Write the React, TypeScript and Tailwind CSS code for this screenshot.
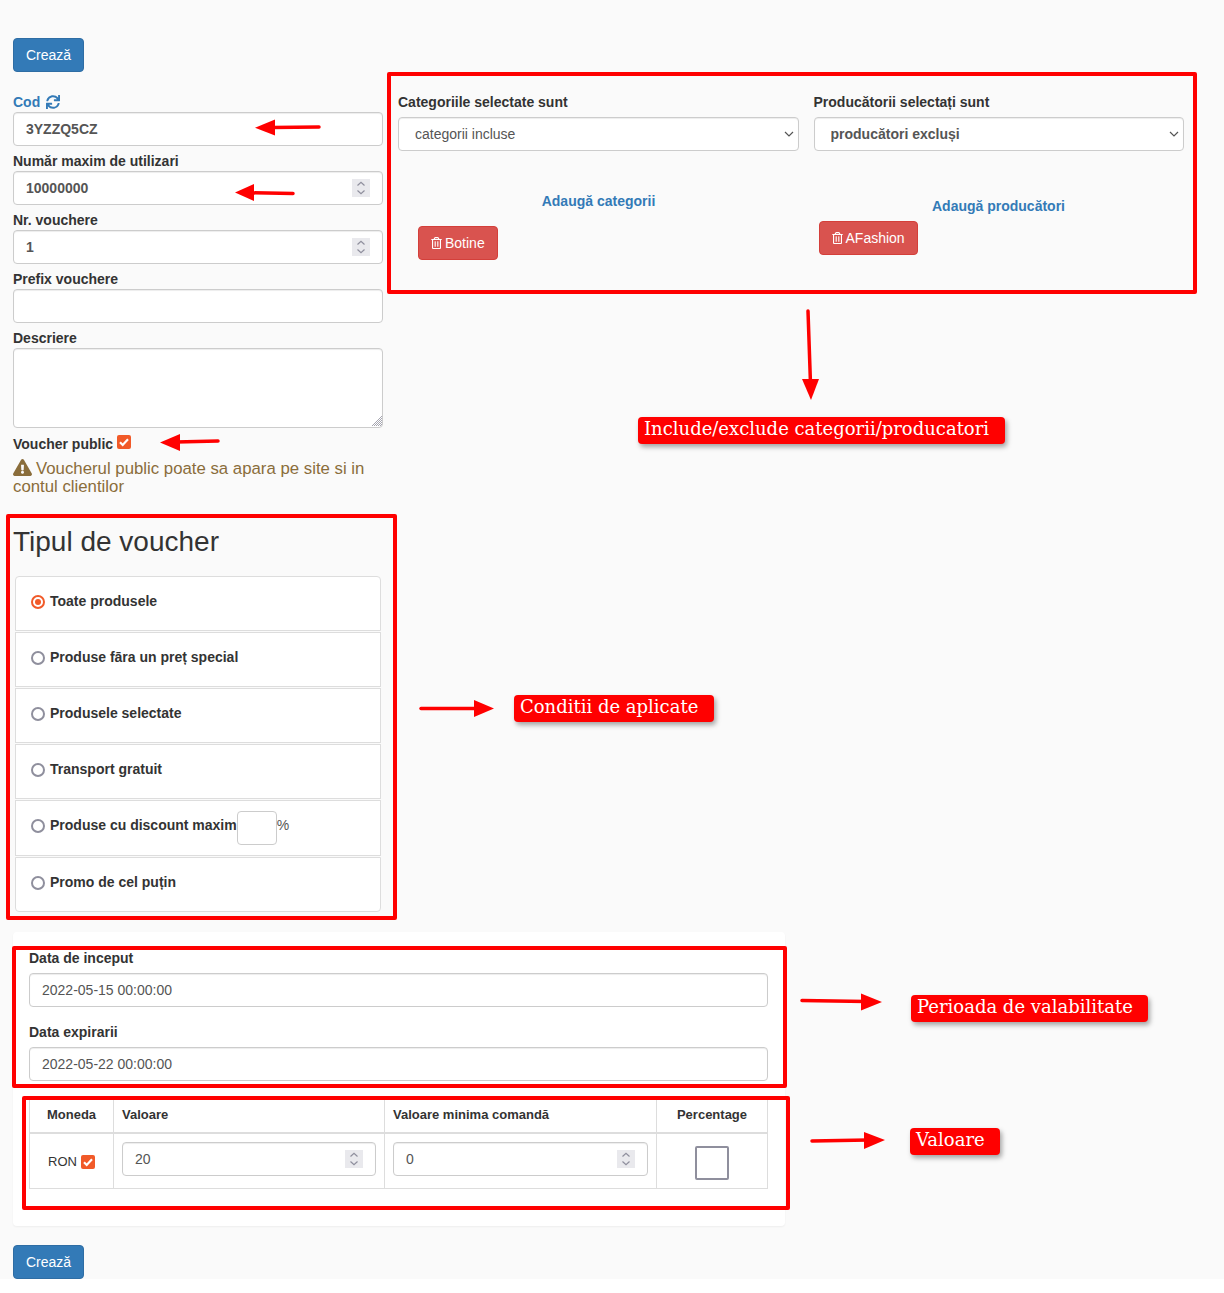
import React from 'react';
import { FaExclamationTriangle, FaRegTrashAlt, FaSync } from 'react-icons/fa';

const inputClass =
  'block w-full h-[34px] px-3 bg-white border border-[#ccc] rounded-[4px] text-sm text-[#555] shadow-[inset_0_1px_1px_rgba(0,0,0,0.075)] outline-none';
const labelClass = 'block text-sm leading-5 font-bold text-[#333]';
const numberClass = `${inputClass} [appearance:textfield] [&::-webkit-inner-spin-button]:appearance-none`;

const CreateButton = () => (
  <button
    type="button"
    className="block w-[71px] h-[34px] bg-[#337ab7] border border-[#2e6da4] rounded-[4px] text-sm text-white"
  >
    Crează
  </button>
);

const NumberField = ({ value, bold }: { value?: string; bold?: boolean }) => (
  <div className="relative">
    <input type="number" defaultValue={value} className={`${numberClass} ${bold ? 'font-bold' : ''}`} />
    <span className="absolute right-[13px] top-[8px] w-[18px] h-[18px] bg-[#e9e9ed]">
      <svg viewBox="0 0 18 18" className="w-[18px] h-[18px]" fill="none" stroke="#8f8f9d" strokeWidth="1.2">
        <path d="M5.5 6.5L9 3.2l3.5 3.3" />
        <path d="M5.5 11.5L9 14.8l3.5-3.3" />
      </svg>
    </span>
  </div>
);

const Check = () => (
  <span className="inline-flex shrink-0 items-center justify-center w-[14px] h-[14px] bg-[#f15a29] rounded-[2px]">
    <svg viewBox="0 0 14 14" className="w-[14px] h-[14px]" fill="none" stroke="#fff" strokeWidth="2.2">
      <path d="M3 7.3l2.7 2.7L11 4.3" />
    </svg>
  </span>
);

const Select = ({ value, bold }: { value: string; bold?: boolean }) => (
  <div className="relative">
    <select
      defaultValue={value}
      className={`${inputClass} appearance-none pl-4 ${bold ? 'font-bold' : ''}`}
    >
      <option>{value}</option>
    </select>
    <svg
      viewBox="0 0 10 6"
      className="absolute right-[5px] top-[14px] w-[10px] h-[6px]"
      fill="none"
      stroke="#555"
      strokeWidth="1.2"
    >
      <path d="M1 1l4 4 4-4" />
    </svg>
  </div>
);

const DeleteButton = ({ label }: { label: string }) => (
  <button
    type="button"
    className="inline-flex items-center h-[34px] px-3 bg-[#d9534f] border border-[#d43f3a] rounded-[4px] text-sm text-white"
  >
    <FaRegTrashAlt className="w-[11px] h-[12px] mr-[3px]" />
    {label}
  </button>
);

const options = [
  { label: 'Toate produsele', checked: true, tall: false },
  { label: 'Produse fāra un preț special', tall: false },
  { label: 'Produsele selectate', tall: false },
  { label: 'Transport gratuit', tall: false },
  { label: 'Produse cu discount maxim', tall: true },
  { label: 'Promo de cel puțin', tall: false },
];

const Callout = ({ className, children }: { className: string; children: React.ReactNode }) => (
  <div
    className={`absolute h-[27px] pl-[6px] bg-[#ff0000] rounded-[4px] text-white text-[18px] leading-[23px] whitespace-nowrap shadow-[2px_3px_5px_rgba(0,0,0,0.35)] font-['DejaVu_Serif',serif] ${className}`}
  >
    {children}
  </div>
);

const RedBox = ({ className }: { className: string }) => (
  <div className={`absolute border-4 border-[#ff0000] rounded-[2px] pointer-events-none ${className}`} />
);

const arrows = [
  { line: 'M319 127 L272 127.5', head: '255,127.7 275,119.5 275,135.5' },
  { line: 'M293 193.5 L250 192.8', head: '235,192.5 254,184 254,201' },
  { line: 'M218 441 L176 442', head: '160,442.5 180,434 180,451' },
  { line: 'M808 311 L810.5 384', head: '811,400 802,379 819,379' },
  { line: 'M421 708.5 L478 708.5', head: '494,708.5 474,700 474,717' },
  { line: 'M802 1000.5 L866 1001.5', head: '882,1002 861,993.5 861,1010.5' },
  { line: 'M812 1141 L868 1140', head: '885,1140 864,1132 864,1149' },
];

export default function App() {
  return (
    <div className="relative w-[1224px] h-[1293px] bg-white font-['Liberation_Sans',sans-serif] text-sm text-[#333] overflow-hidden">
      <div className="h-[1279px] bg-[#fafafa] pl-[13px] pt-[38px]">
        <CreateButton />

        <div className="flex mt-[20px]">
          <div className="w-[370px]">
            <label className="flex items-center text-sm leading-5 font-bold text-[#337ab7]">
              Cod
              <FaSync className="w-[14px] h-[14px] ml-[6px]" />
            </label>
            <input type="text" defaultValue="3YZZQ5CZ" className={`${inputClass} font-bold`} />

            <label className={`${labelClass} mt-[5px]`}>Număr maxim de utilizari</label>
            <NumberField value="10000000" bold />

            <label className={`${labelClass} mt-[5px]`}>Nr. vouchere</label>
            <NumberField value="1" bold />

            <label className={`${labelClass} mt-[5px]`}>Prefix vouchere</label>
            <input type="text" className={inputClass} />

            <label className={`${labelClass} mt-[5px]`}>Descriere</label>
            <div className="relative">
              <textarea className={`${inputClass} h-[80px] py-[6px] resize-none`} />
              <svg viewBox="0 0 11 10" className="absolute right-[1px] bottom-[2px] w-[11px] h-[10px]" stroke="#8f8f9d" strokeWidth="0.8">
                <path d="M1 10L11 0M3 10L11 2M5 10L11 4M7 10L11 6M9 10L11 8" />
              </svg>
            </div>

            <label className={`${labelClass} flex items-center mt-[6px]`}>
              Voucher public
              <span className="ml-[4px]">
                <Check />
              </span>
            </label>

            <p className="mt-[5px] text-[16.8px] leading-[18px] text-[#8a6d3b]">
              <FaExclamationTriangle className="inline-block w-[19px] h-[17px] mr-[4px] align-[-2px]" />
              Voucherul public poate sa apara pe site si in contul clientilor
            </p>
          </div>

          <div className="flex ml-[15px]">
            <div className="w-[401px]">
              <label className={`${labelClass} mb-[5px]`}>Categoriile selectate sunt</label>
              <Select value="categorii incluse" />
              <a className="block mt-[40px] text-center leading-5 font-bold text-[#337ab7]">Adaugă categorii</a>
              <div className="mt-[15px] ml-[20px]">
                <DeleteButton label="Botine" />
              </div>
            </div>
            <div className="w-[370px] ml-[14.5px]">
              <label className={`${labelClass} mb-[5px]`}>Producătorii selectați sunt</label>
              <Select value="producători excluși" bold />
              <a className="block mt-[45px] text-center leading-5 font-bold text-[#337ab7]">Adaugă producători</a>
              <div className="mt-[5px] ml-[5px]">
                <DeleteButton label="AFashion" />
              </div>
            </div>
          </div>
        </div>

        <h3 className="mt-[29px] mb-[18px] text-[28px] leading-[33px] font-normal text-[#333]">Tipul de voucher</h3>

        <div className="flex flex-col gap-px ml-[2px] w-[366px]">
          {options.map((o) => (
            <div
              key={o.label}
              className={`flex items-start pt-[14px] pl-[15px] bg-white border border-[#ddd] first:rounded-t-[4px] last:rounded-b-[4px] ${o.tall ? 'h-[56px]' : 'h-[55px]'}`}
            >
              <span
                className={`shrink-0 mt-[4px] mr-[5px] w-[14px] h-[14px] rounded-full border-2 bg-white flex items-center justify-center ${o.checked ? 'border-[#f15a29]' : 'border-[#8f8f9d]'}`}
              >
                {o.checked && <span className="w-[6px] h-[6px] rounded-full bg-[#f15a29]" />}
              </span>
              <span className="leading-5 font-bold text-[#333]">{o.label}</span>
              {o.tall && (
                <>
                  <input type="text" className="w-[40px] h-[34px] -mt-[4px] bg-white border border-[#ccc] rounded-[4px] outline-none" />
                  <span className="leading-5 text-[#555]">%</span>
                </>
              )}
            </div>
          ))}
        </div>

        <div className="mt-[20px] w-[772px] h-[294px] pt-[16px] pl-[16px] bg-white rounded-[4px] shadow-[0_1px_2px_rgba(0,0,0,0.05)]">
          <div className="w-[739px]">
            <label className={`${labelClass} mb-[5px]`}>Data de inceput</label>
            <input type="text" defaultValue="2022-05-15 00:00:00" className={inputClass} />
            <label className={`${labelClass} mt-[15px] mb-[5px]`}>Data expirarii</label>
            <input type="text" defaultValue="2022-05-22 00:00:00" className={inputClass} />
          </div>

          <table className="mt-[16px] w-[738px] table-fixed border-collapse text-[13px] text-[#333]">
            <colgroup>
              <col className="w-[84px]" />
              <col className="w-[271px]" />
              <col className="w-[272px]" />
              <col className="w-[111px]" />
            </colgroup>
            <thead>
              <tr className="h-[35px]">
                <th className="border border-[#ddd] border-b-2 pt-[2px] font-bold text-center">Moneda</th>
                <th className="border border-[#ddd] border-b-2 pt-[2px] font-bold text-left pl-[8px]">Valoare</th>
                <th className="border border-[#ddd] border-b-2 pt-[2px] font-bold text-left pl-[8px]">Valoare minima comandă</th>
                <th className="border border-[#ddd] border-b-2 pt-[2px] font-bold text-center">Percentage</th>
              </tr>
            </thead>
            <tbody>
              <tr className="h-[56px]">
                <td className="border border-[#ddd]">
                  <div className="flex items-center justify-center gap-[4px] pt-[3px] text-[#333]">
                    RON <Check />
                  </div>
                </td>
                <td className="border border-[#ddd] px-[8px] pb-[3px] text-sm">
                  <NumberField value="20" />
                </td>
                <td className="border border-[#ddd] px-[8px] pb-[3px] text-sm">
                  <NumberField value="0" />
                </td>
                <td className="border border-[#ddd]">
                  <span className="block mx-auto mt-[4px] w-[34px] h-[34px] bg-white border-2 border-[#8f8f9d] rounded-[2px]" />
                </td>
              </tr>
            </tbody>
          </table>
        </div>

        <div className="mt-[19px]">
          <CreateButton />
        </div>
      </div>

      <RedBox className="left-[387px] top-[72px] w-[810px] h-[222px]" />
      <RedBox className="left-[6px] top-[514px] w-[391px] h-[406px]" />
      <RedBox className="left-[12px] top-[946px] w-[775px] h-[142px]" />
      <RedBox className="left-[22px] top-[1096px] w-[768px] h-[114px]" />

      <svg className="absolute inset-0 w-[1224px] h-[1293px] pointer-events-none">
        {arrows.map((a) => (
          <g key={a.head}>
            <path d={a.line} stroke="#ff0000" strokeWidth="3.5" strokeLinecap="round" fill="none" />
            <polygon points={a.head} fill="#ff0000" />
          </g>
        ))}
      </svg>

      <Callout className="left-[638px] top-[417px] w-[367px]">Include/exclude categorii/producatori</Callout>
      <Callout className="left-[514px] top-[695px] w-[200px]">Conditii de aplicate</Callout>
      <Callout className="left-[911px] top-[995px] w-[237px]">Perioada de valabilitate</Callout>
      <Callout className="left-[910px] top-[1128px] w-[90px]">Valoare</Callout>
    </div>
  );
}
